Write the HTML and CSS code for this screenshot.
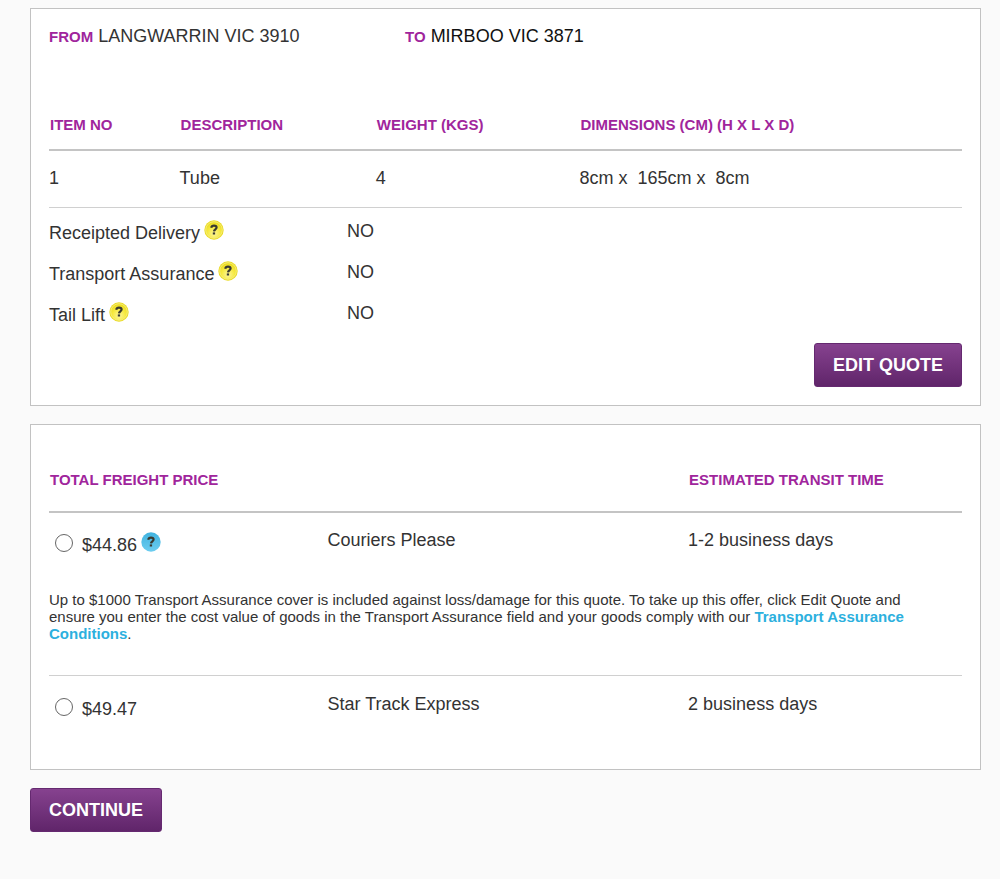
FILE: index.html
```html
<!DOCTYPE html>
<html lang="en">
<head>
<meta charset="utf-8">
<meta name="viewport" content="width=device-width, initial-scale=1">
<title>Freight quote</title>
<link rel="stylesheet" href="styles.css">
</head>
<body>
<svg class="defs" aria-hidden="true">
  <defs>
    <radialGradient id="yellow" cx="50%" cy="72%" r="66%">
      <stop offset="0" stop-color="#fdf69a"/>
      <stop offset="0.6" stop-color="#f6e93f"/>
      <stop offset="1" stop-color="#ecdc22"/>
    </radialGradient>
    <linearGradient id="blue" x1="0" y1="0" x2="0" y2="1">
      <stop offset="0" stop-color="#41b3df"/>
      <stop offset="1" stop-color="#6ccdf0"/>
    </linearGradient>
    <symbol id="mark" viewBox="0 0 20 20">
      <path d="M7.2 7.8C7.5 6.3 8.6 5.7 10 5.7c1.7 0 2.6.7 2.6 1.9 0 1.7-2.4 1.8-2.6 3.7" fill="none" stroke="#3a3a30" stroke-width="2.2"/>
      <rect x="8.8" y="12.4" width="2.3" height="2.1" fill="#3a3a30"/>
    </symbol>
    <symbol id="help-yellow" viewBox="0 0 20 20">
      <circle cx="10" cy="10" r="9.7" fill="#eadb25"/>
      <circle cx="10" cy="10" r="8.3" fill="url(#yellow)" stroke="#f8f08a" stroke-width="0.8"/>
      <use href="#mark"/>
    </symbol>
    <symbol id="help-blue" viewBox="0 0 20 20">
      <circle cx="10" cy="10" r="9.7" fill="url(#blue)"/>
      <use href="#mark"/>
    </symbol>
  </defs>
</svg>
<main class="page">
  <section class="panel">
    <div class="route">
      <p class="place"><span class="tag">FROM</span> LANGWARRIN VIC 3910</p>
      <p class="place place-to"><span class="tag">TO</span> MIRBOO VIC 3871</p>
    </div>
    <table class="grid items">
      <colgroup><col class="c-no"><col class="c-desc"><col class="c-weight"><col></colgroup>
      <thead>
        <tr><th scope="col">ITEM NO</th><th scope="col">DESCRIPTION</th><th scope="col">WEIGHT (KGS)</th><th scope="col">DIMENSIONS (CM) (H X L X D)</th></tr>
      </thead>
      <tbody>
        <tr><td>1</td><td>Tube</td><td>4</td><td>8cm x &nbsp;165cm x &nbsp;8cm</td></tr>
      </tbody>
    </table>
    <dl class="options">
      <dt>Receipted Delivery <button type="button" class="help" aria-label="About receipted delivery"><svg><use href="#help-yellow"/></svg></button></dt><dd>NO</dd>
      <dt>Transport Assurance <button type="button" class="help" aria-label="About transport assurance"><svg><use href="#help-yellow"/></svg></button></dt><dd>NO</dd>
      <dt>Tail Lift <button type="button" class="help" aria-label="About tail lift"><svg><use href="#help-yellow"/></svg></button></dt><dd>NO</dd>
    </dl>
    <div class="actions"><button type="button" class="btn">EDIT QUOTE</button></div>
  </section>
  <section class="panel">
    <table class="grid quotes">
      <colgroup><col class="c-price"><col class="c-carrier"><col></colgroup>
      <thead>
        <tr><th scope="col">TOTAL FREIGHT PRICE</th><th></th><th scope="col">ESTIMATED TRANSIT TIME</th></tr>
      </thead>
      <tbody>
        <tr>
          <td><div class="price"><input type="radio" name="quote" id="q1"><label for="q1">$44.86</label><button type="button" class="help" aria-label="About this price"><svg><use href="#help-blue"/></svg></button></div></td>
          <td>Couriers Please</td>
          <td>1-2 business days</td>
        </tr>
        <tr class="note">
          <td colspan="3">Up to $1000 Transport Assurance cover is included against loss/damage for this quote. To take up this offer, click Edit Quote and ensure you enter the cost value of goods in the Transport Assurance field and your goods comply with our <a href="#">Transport Assurance Conditions</a>.</td>
        </tr>
        <tr>
          <td><div class="price"><input type="radio" name="quote" id="q2"><label for="q2">$49.47</label></div></td>
          <td>Star Track Express</td>
          <td>2 business days</td>
        </tr>
      </tbody>
    </table>
  </section>
  <button type="submit" class="btn">CONTINUE</button>
</main>
</body>
</html>
```
FILE: styles.css
```css
* { box-sizing: border-box; }

body {
  margin: 0;
  background: #fafafa;
  color: #333;
  font: 18px/22px "Liberation Sans", Arial, sans-serif;
}

.defs { position: absolute; width: 0; height: 0; }

.page { padding: 8px 19px 24px 30px; }

.panel {
  margin-bottom: 18px;
  padding: 16px 18px 18px;
  background: #fff;
  border: 1px solid #c2c2c2;
}

.route { display: flex; margin-bottom: 66px; }
.place { margin: 0; width: 39%; }
.place-to { color: #111; }
.tag { color: #a0259c; font-size: 15px; font-weight: bold; }

.grid { width: 100%; table-layout: fixed; border-collapse: separate; border-spacing: 0; }
.grid th, .grid td { padding: 0; text-align: left; vertical-align: top; }
.grid th {
  padding: 0 1px;
  border-bottom: 2px solid #c4c4c4;
  color: #a0259c;
  font-size: 15px;
}

.c-no { width: 14.3%; }
.c-desc { width: 21.5%; }
.c-weight { width: 22.3%; }
.grid.items th { height: 37px; }
.grid.items td { padding: 16px 0 18px; border-bottom: 1px solid #d0d0d0; }

.options {
  display: grid;
  grid-template-columns: 298px 1fr;
  row-gap: 17px;
  margin: 12px 0 17px;
}
.options dt, .options dd { display: flex; align-items: flex-start; margin: 0; height: 24px; }
.options dt { padding-top: 2px; gap: 4px; }

.help {
  width: 20px;
  height: 20px;
  padding: 0;
  border: 0;
  background: none;
  cursor: pointer;
  margin-top: -2px;
}
.help svg { display: block; width: 20px; height: 20px; }

.actions { display: flex; justify-content: flex-end; }

.btn {
  height: 44px;
  padding: 0 18px;
  border: 1px solid #652970;
  border-radius: 3px;
  background: linear-gradient(#86428f, #60256a);
  color: #fff;
  font: bold 18px/22px "Liberation Sans", Arial, sans-serif;
  cursor: pointer;
}

.c-price { width: 30.5%; }
.c-carrier { width: 39.5%; }
.grid.quotes th { height: 72px; padding: 28px 1px 0; }
.grid.quotes td { padding-top: 16px; }
.grid.quotes .note td {
  padding: 30px 50px 33px 0;
  border-bottom: 1px solid #d0d0d0;
  font-size: 15px;
  line-height: 17px;
}
.note a { color: #2cb0de; font-weight: bold; text-decoration: none; }

.price { display: flex; align-items: flex-start; gap: 4px; height: 32px; }
.price label { padding-top: 5px; }
.price .help { margin-top: 3px; }
.price input {
  appearance: none;
  width: 18px;
  height: 18px;
  margin: 5px 5px 0 6px;
  border: 1px solid #666;
  border-radius: 50%;
  background: #fff;
}
.price input:checked { background: radial-gradient(#6d2d78 40%, #fff 45%); }
.grid.quotes tbody tr:last-child td { padding: 17px 0 26px; }
```
